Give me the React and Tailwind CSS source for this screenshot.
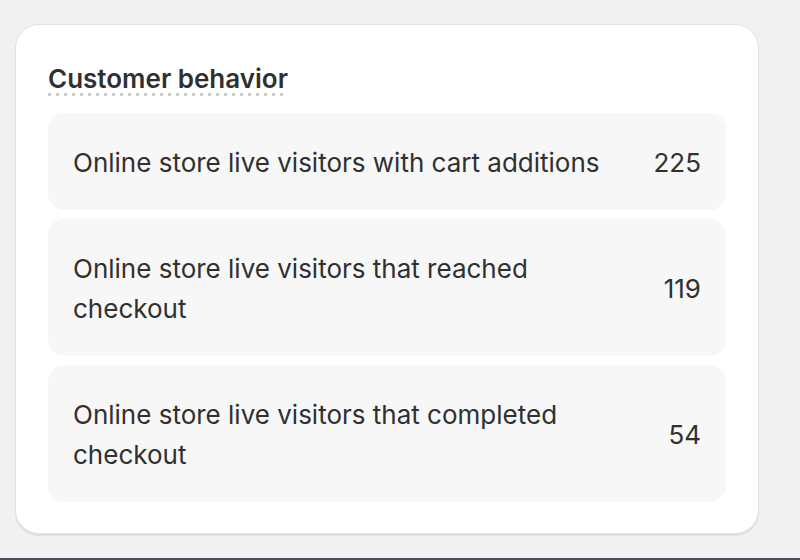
import React from "react";

const rows = [
  { label: "Online store live visitors with cart additions", value: "225" },
  { label: "Online store live visitors that reached checkout", value: "119" },
  { label: "Online store live visitors that completed checkout", value: "54" },
];

const App = () => {
  return (
    <div
      className="h-[560px] w-[800px] bg-[#f1f1f1] flex flex-col text-[#303030]"
      style={{ fontFamily: "Inter, 'Noto Sans', sans-serif" }}
    >
      <div className="flex-1 pt-[24px] pl-[15px] pr-[41px]">
        <div className="bg-white rounded-[24px] border border-[#e3e3e3] shadow-[0_2px_1px_rgba(0,0,0,0.08)] px-[32px] pt-[38px] pb-[31px]">
          <h2 className="inline-block text-[26px] leading-[32px] pb-[1px] font-semibold bg-[radial-gradient(circle_at_1.5px_1.5px,#c4c4c4_1.3px,transparent_1.7px)] bg-[length:8px_3px] bg-repeat-x bg-left-bottom">
            Customer behavior
          </h2>
          <div className="mt-[17px] flex flex-col gap-[9px]">
            {rows.map((row) => (
              <div
                key={row.label}
                className="bg-[#f7f7f7] rounded-[16px] px-[25px] pt-[30px] pb-[27px] flex items-center justify-between gap-[40px]"
              >
                <span className="text-[26px] leading-[40px] max-w-[540px]">{row.label}</span>
                <span className="text-[26px] leading-[40px]">{row.value}</span>
              </div>
            ))}
          </div>
        </div>
      </div>
      <div className="h-[2px] bg-[#4d4b5c]" />
    </div>
  );
};

export default App;
